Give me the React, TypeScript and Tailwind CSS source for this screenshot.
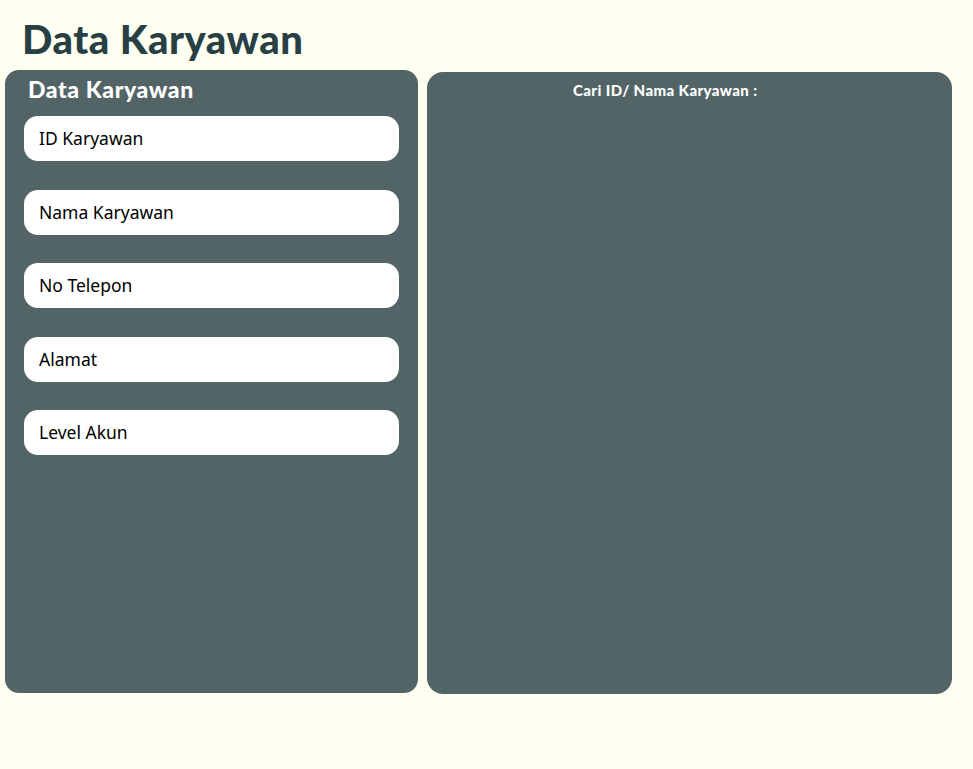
import React from "react";

const fields = ["ID Karyawan", "Nama Karyawan", "No Telepon", "Alamat", "Level Akun"];

export default function App() {
  return (
    <div className="w-[973px] h-[769px] bg-[#fefff1] overflow-hidden" style={{ fontFamily: "Lato, 'Noto Sans', sans-serif" }}>
      <div className="h-[70px] pl-[22px] pt-[14px]">
        <h1 className="text-[40px] leading-[50px] font-black text-[#283f45] tracking-[0.5px]" style={{ fontFamily: "Lato, sans-serif" }}>
          Data Karyawan
        </h1>
      </div>
      <div className="flex items-start gap-[9px] pl-[5px]">
        <div className="w-[413px] h-[623px] rounded-[14px] bg-[#536467] px-[19px]">
          <div className="h-[46px] pl-[4px] pt-[5px]">
            <div className="text-[23px] leading-[28px] font-black text-white tracking-[0.6px]">Data Karyawan</div>
          </div>
          <div className="flex flex-col gap-[28.5px]">
            {fields.map((f) => (
              <div key={f} className="h-[45px] rounded-[14px] bg-white flex items-center pl-[15px]">
                <span className="text-[17.5px] text-black" style={{ fontFamily: "'Noto Sans', sans-serif" }}>{f}</span>
              </div>
            ))}
          </div>
        </div>
        <div className="mt-[2px] w-[525px] h-[622px] rounded-[16px] bg-[#536467] pl-[146px] pt-[9px]">
          <div className="text-[15px] leading-[18px] font-black text-white tracking-[0.4px]">Cari ID/ Nama Karyawan :</div>
        </div>
      </div>
    </div>
  );
}
